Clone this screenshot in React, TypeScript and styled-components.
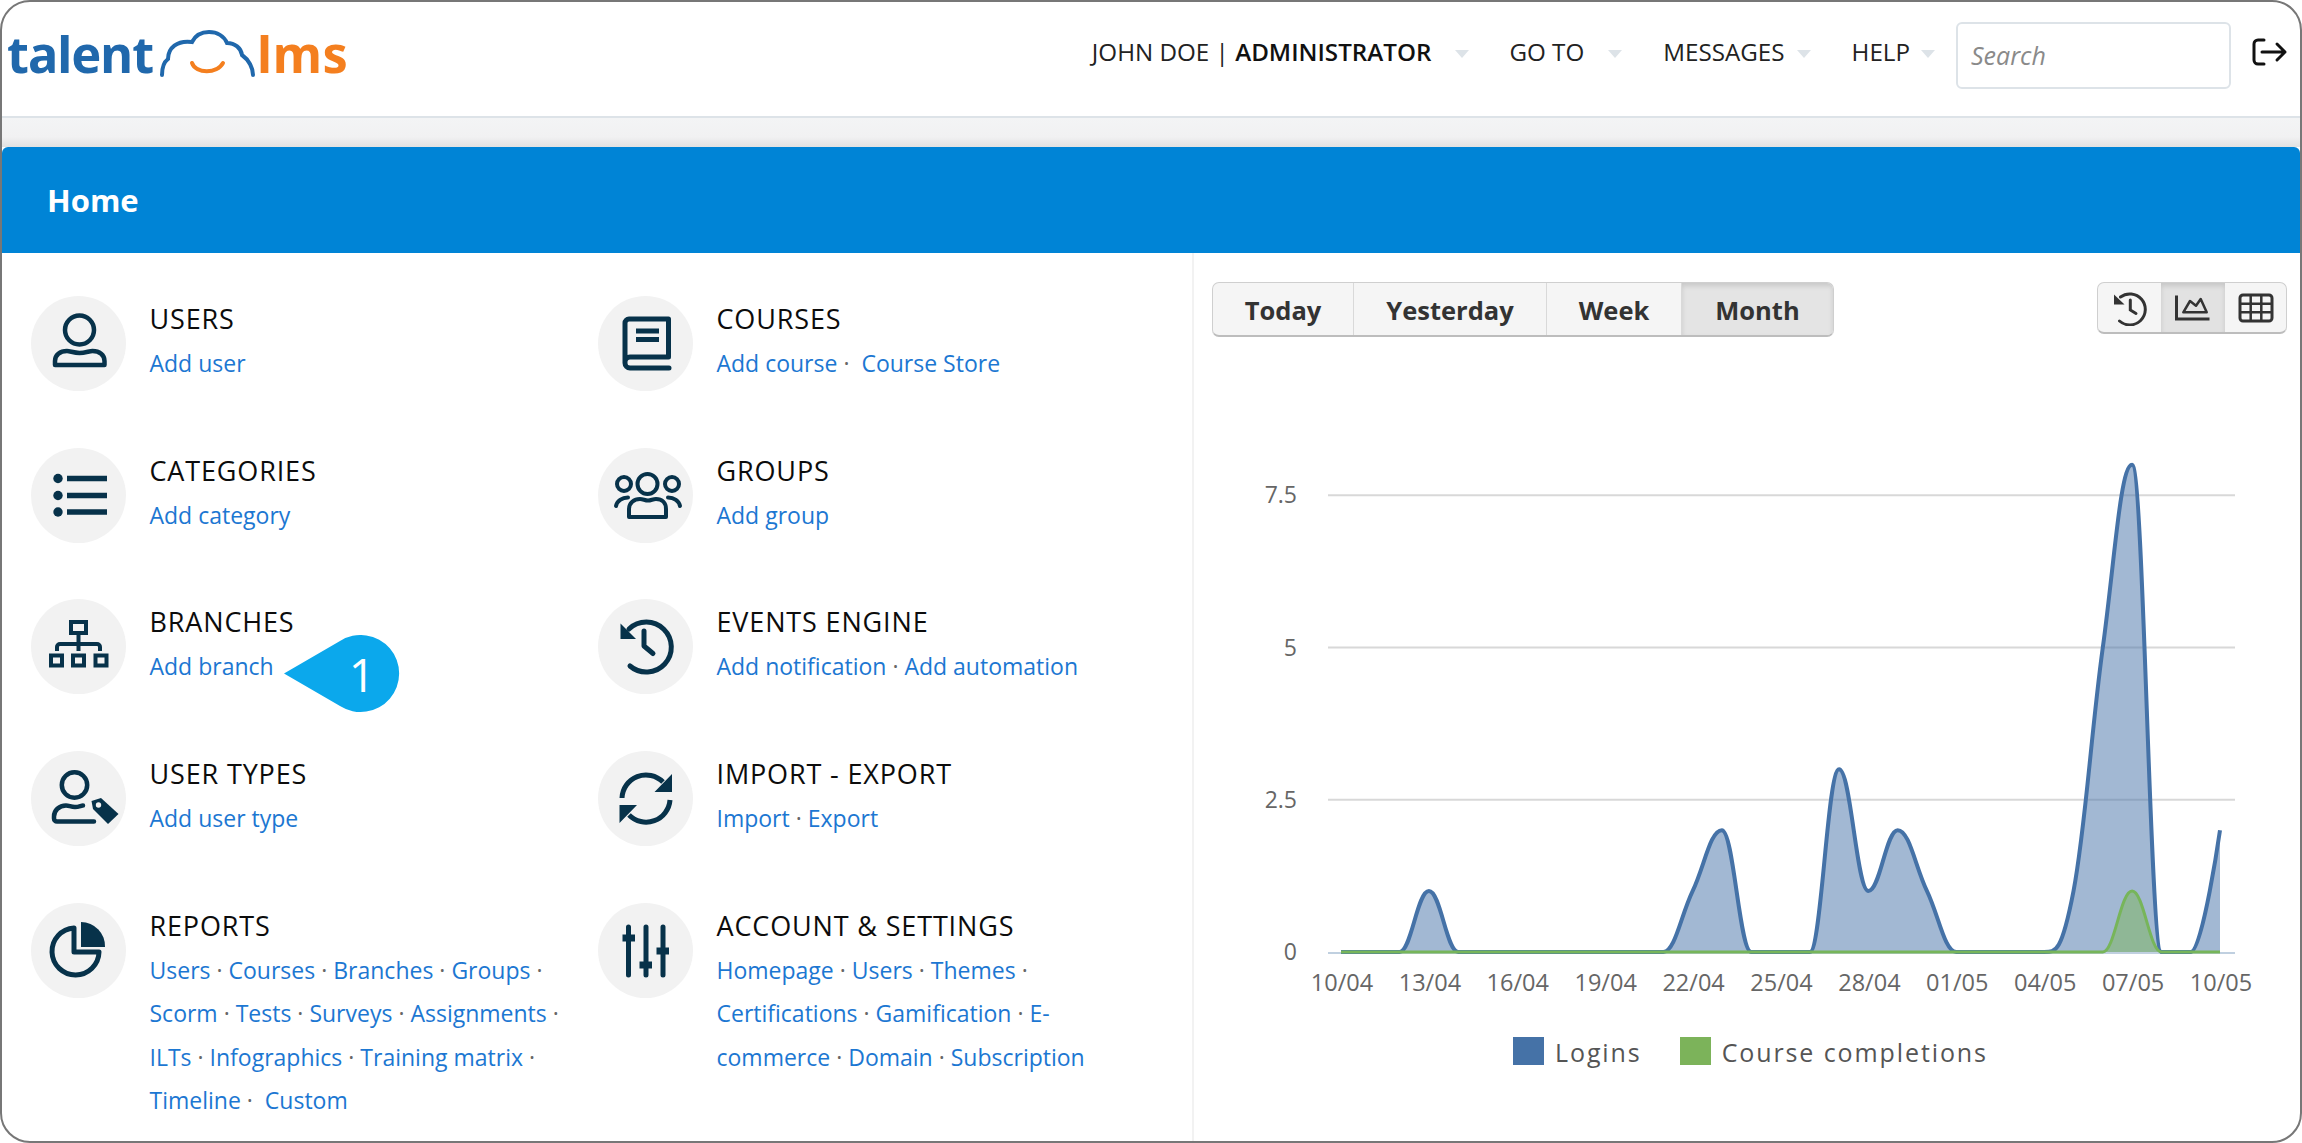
import React from 'react';
import styled, { createGlobalStyle } from 'styled-components';

const GlobalStyle = createGlobalStyle`
  html, body { margin: 0; padding: 0; background: #fff; overflow: hidden; }
  body { font-family: "Open Sans", "Noto Sans", sans-serif; }
`;

const INK = '#07324a';

const Frame = styled.div`
  width: 2302px;
  height: 1143px;
  box-sizing: border-box;
  border: 2px solid #777;
  border-radius: 30px;
  overflow: hidden;
  display: flex;
  flex-direction: column;
  background: #fff;
`;

const Header = styled.header`
  height: 114px;
  flex: none;
  border-bottom: 2px solid #dde3e8;
  display: flex;
  align-items: center;
  justify-content: space-between;
  padding: 0 12px 0 5px;
  box-sizing: content-box;
`;

const Logo = styled.div`
  display: flex;
  align-items: flex-end;
  height: 47px;
  margin-top: -12px;
`;

const LogoWord = styled.span<{ $color: string; $spacing: number }>`
  font-family: "Noto Sans", sans-serif;
  font-weight: 700;
  font-size: 50.500px;
  line-height: 47px;
  letter-spacing: ${p => p.$spacing}px;
  color: ${p => p.$color};
`;

const CloudMark = styled.svg`
  flex: none;
  margin: 0 1px 0 6px;
`;

const Nav = styled.nav`
  display: flex;
  align-items: center;
`;

const NavItem = styled.div<{ $gap: number }>`
  display: flex;
  align-items: center;
  margin-right: ${p => p.$gap}px;
  margin-top: -15px;
  font-size: 24.200px;
  color: #222;
  white-space: nowrap;
  strong { font-weight: 600; color: #111; }
`;

const Caret = styled.span<{ $gap: number }>`
  width: 0;
  height: 0;
  margin-left: ${p => p.$gap}px;
  margin-top: 4px;
  border-left: 7px solid transparent;
  border-right: 7px solid transparent;
  border-top: 8px solid #dde3e8;
`;

const SearchBox = styled.input`
  width: 275px;
  height: 67px;
  box-sizing: border-box;
  border: 2px solid #dde3e8;
  border-radius: 6px;
  padding: 0 13px 2px;
  margin-top: -7px;
  font-family: "Open Sans", sans-serif;
  font-style: italic;
  font-size: 25px;
  &::placeholder { color: #8a8a8a; opacity: 1; }
`;

const LogoutIcon = styled.svg`
  width: 36px;
  height: 28px;
  margin-left: 21px;
  margin-top: -14px;
`;

const Band = styled.div`
  height: 29px;
  flex: none;
  background: linear-gradient(#f3f4f5 0%, #f1f1f2 65%, #e2e2e2 100%);
`;

const TitleBar = styled.div`
  height: 106px;
  flex: none;
  display: flex;
  align-items: center;
  padding-left: 45px;
  background: #0084d6;
  border-radius: 6px 6px 0 0;
`;

const PageTitle = styled.h1`
  margin: 0;
  font-family: "Open Sans", sans-serif;
  font-size: 31px;
  font-weight: 700;
  color: #fff;
`;

const Main = styled.main`
  flex: 1;
  display: flex;
  min-height: 0;
`;

const MenuGrid = styled.section`
  position: relative;
  width: 1190px;
  flex: none;
  box-sizing: border-box;
  padding: 43px 0 0 28.500px;
  display: grid;
  grid-template-columns: 567px 1fr;
  grid-auto-rows: 151.700px;
`;

const MenuRow = styled.div`
  display: flex;
  gap: 24px;
  min-width: 0;
`;

const IconCircle = styled.div`
  width: 95px;
  height: 95px;
  flex: none;
  border-radius: 50%;
  background: #f2f2f2;
  svg { display: block; }
`;

const MenuText = styled.div`
  width: 420px;
  flex: none;
`;

const MenuTitle = styled.div`
  font-size: 27px;
  font-weight: 500;
  line-height: 46px;
  letter-spacing: 0.850px;
  color: #0c0c0c;
`;

const LinkList = styled.div`
  font-size: 23px;
  line-height: 43.400px;
`;

const MenuLink = styled.a`
  color: #1c77d2;
  text-decoration: none;
`;

const Dot = styled.span`
  color: #666;
`;

const Callout = styled.div`
  position: absolute;
  left: 280px;
  top: 382px;
  width: 120px;
  height: 78px;
`;

const CalloutNumber = styled.span`
  position: absolute;
  left: 60px;
  top: 0;
  width: 40px;
  text-align: center;
  font-size: 46px;
  line-height: 78px;
  color: #fff;
`;

const ChartPanel = styled.section`
  flex: 1;
  min-width: 0;
  border-left: 2px solid #f2f2f2;
  display: flex;
  flex-direction: column;
`;

const Toolbar = styled.div`
  display: flex;
  justify-content: space-between;
  align-items: flex-start;
  padding: 29px 13px 0 18px;
  height: 58px;
  flex: none;
  box-sizing: content-box;
`;

const Segments = styled.div`
  display: flex;
  height: 55px;
  box-sizing: border-box;
  border: 1px solid #cfcfcf;
  border-bottom: 2px solid #bdbdbd;
  border-radius: 7px;
  background: #f5f5f5;
  overflow: hidden;
`;

const SegmentButton = styled.button<{ $width: number; $active?: boolean }>`
  width: ${p => p.$width}px;
  border: 0;
  border-right: 1px solid #d9d9d9;
  padding: 2px 0 0;
  font-family: "Open Sans", sans-serif;
  font-size: 25.500px;
  font-weight: 700;
  color: #333;
  background: ${p => (p.$active ? '#e4e4e4' : 'transparent')};
  box-shadow: ${p => (p.$active ? 'inset 0 3px 5px rgba(0,0,0,.12)' : 'none')};
  &:last-child { border-right: 0; }
`;

const IconGroup = styled(Segments)`
  height: 52px;
`;

const IconButton = styled.button<{ $width: number; $active?: boolean }>`
  width: ${p => p.$width}px;
  border: 0;
  padding: 0;
  display: flex;
  align-items: center;
  justify-content: center;
  background: ${p => (p.$active ? '#e2e2e2' : 'transparent')};
  box-shadow: ${p => (p.$active ? 'inset 0 3px 5px rgba(0,0,0,.12)' : 'none')};
`;

const ChartSvg = styled.svg`
  display: block;
  flex: none;
  width: 1106px;
  height: 670px;
  text { font-family: "Open Sans", sans-serif; }
`;

const Legend = styled.div`
  display: flex;
  align-items: center;
  margin-top: 28px;
  padding-left: 319px;
  height: 28px;
  font-size: 25px;
  color: #555;
  letter-spacing: 1.900px;
`;

const Swatch = styled.span<{ $color: string }>`
  width: 31px;
  height: 28px;
  margin-right: 11px;
  margin-top: -2px;
  background: ${p => p.$color};
`;

const LegendLabel = styled.span`
  margin-right: 38px;
`;

// same smoothing highcharts uses for spline series
const toSpline = (pts: [number, number][]): string => {
  const conts = pts.map(([x, y], i) => {
    if (i === 0 || i === pts.length - 1) return { l: y, r: y, lx: x, rx: x };
    const [px, py] = pts[i - 1];
    const [nx, ny] = pts[i + 1];
    const lx = (1.5 * x + px) / 2.5;
    const rx = (1.5 * x + nx) / 2.5;
    let l = (1.5 * y + py) / 2.5;
    let r = (1.5 * y + ny) / 2.5;
    const c = ((r - l) * (rx - x)) / (rx - lx) + y - r;
    l += c;
    r += c;
    if (l > py && l > y) { l = Math.max(py, y); r = 2 * y - l; }
    else if (l < py && l < y) { l = Math.min(py, y); r = 2 * y - l; }
    if (r > ny && r > y) { r = Math.max(ny, y); l = 2 * y - r; }
    else if (r < ny && r < y) { r = Math.min(ny, y); l = 2 * y - r; }
    return { l, r, lx, rx };
  });
  let d = `M${pts[0][0]} ${pts[0][1]}`;
  for (let i = 1; i < pts.length; i++) {
    d += ` C${conts[i - 1].rx} ${conts[i - 1].r} ${conts[i].lx} ${conts[i].l} ${pts[i][0]} ${pts[i][1]}`;
  }
  return d;
};

const LOGINS = [0, 0, 0, 1, 0, 0, 0, 0, 0, 0, 0, 0, 1, 2, 0, 0, 0, 3, 1, 2, 1, 0, 0, 0, 0, 1, 5, 8, 0, 0, 2];
const COMPLETIONS = LOGINS.map((_, i) => (i === 27 ? 1 : 0));
const X0 = 1341;
const DAY = 29.3;
const Y0 = 952;
const UNIT = 60.9;
const toPoints = (vals: number[]): [number, number][] => vals.map((v, i) => [X0 + i * DAY, Y0 - v * UNIT]);
const X_LABELS = ['10/04', '13/04', '16/04', '19/04', '22/04', '25/04', '28/04', '01/05', '04/05', '07/05', '10/05'];
const Y_LABELS = [{ t: '7.5', v: 7.5 }, { t: '5', v: 5 }, { t: '2.5', v: 2.5 }];

const Chart = (): React.ReactElement => {
  const loginLine = toSpline(toPoints(LOGINS));
  const doneLine = toSpline(toPoints(COMPLETIONS));
  const close = ` L${X0 + 30 * DAY} ${Y0} L${X0} ${Y0} Z`;
  return (
    <ChartSvg viewBox="1194 340 1106 670">
      {Y_LABELS.map(l => (
        <g key={l.t}>
          <line x1="1328" x2="2235" y1={Y0 - l.v * UNIT} y2={Y0 - l.v * UNIT} stroke="#d8d8d8" strokeWidth="2" />
          <text x="1297" y={Y0 - l.v * UNIT + 8} textAnchor="end" fontSize="23" fill="#666">{l.t}</text>
        </g>
      ))}
      <text x="1297" y={Y0 + 8} textAnchor="end" fontSize="23" fill="#666">0</text>
      <line x1="1328" x2="2235" y1={Y0 + 1} y2={Y0 + 1} stroke="#c0d0e0" strokeWidth="2" />
      <path d={loginLine + close} fill="rgba(69,114,167,.5)" />
      <path d={loginLine} fill="none" stroke="#4572a7" strokeWidth="4" />
      <path d={doneLine + close} fill="rgba(124,181,90,.5)" />
      <path d={doneLine} fill="none" stroke="#77b55a" strokeWidth="3" />
      {X_LABELS.map((l, i) => (
        <text key={l} x={X0 + i * 3 * DAY + 1} y="991" textAnchor="middle" fontSize="23.500" fill="#666">{l}</text>
      ))}
    </ChartSvg>
  );
};

const BASE = { viewBox: '0 0 95 95', width: 95, height: 95, fill: 'none', stroke: INK, strokeWidth: 4.5, strokeLinecap: 'round' as const, strokeLinejoin: 'round' as const };

const icons: Record<string, React.ReactElement> = {
  users: (
    <svg {...BASE}>
      <circle cx="48.500" cy="34" r="14.500" />
      <path d="M24 69 v-4 c0-6 5-10 12-10 c3 0 7 2 12.500 2 s10-2 13-2 c7 0 12 4 12 10 v4 z" />
    </svg>
  ),
  courses: (
    <svg {...BASE} strokeWidth={5}>
      <path d="M70.500 23 H31 a4 4 0 0 0-4 4 v40 a5 5 0 0 0 5 5 h39 M70.500 23 v38 H32 a5 5 0 0 0-5 5" />
      <path d="M38 35 H61 M38 43.500 H61" strokeLinecap="butt" />
    </svg>
  ),
  categories: (
    <svg {...BASE} strokeWidth={5.5}>
      <path d="M36 30.500 H76 M36 47.500 H76 M36 64 H76" strokeLinecap="butt" />
      <g fill={INK} stroke="none">
        <circle cx="27" cy="30.500" r="4.700" />
        <circle cx="27" cy="47.500" r="4.700" />
        <circle cx="27" cy="64" r="4.700" />
      </g>
    </svg>
  ),
  groups: (
    <svg {...BASE} strokeWidth={4}>
      <circle cx="49.500" cy="36" r="10" />
      <circle cx="26" cy="36" r="7" />
      <circle cx="74" cy="36" r="7" />
      <path d="M31 69 H68 V61 c0-6-4-10-10-10 c-3 0-5 1.500-8 1.500 s-5-1.500-8-1.500 c-6 0-11 4-11 10 z" />
      <path d="M18 58 c1-5 6-8.500 12-8.500 M82 58 c-1-5-6-8.500-12-8.500" />
    </svg>
  ),
  branches: (
    <svg {...BASE} strokeWidth={4} strokeLinejoin="miter">
      <rect x="40" y="23" width="15" height="11" />
      <path d="M47.500 34 V52 M26 52 V48 a3 3 0 0 1 3-3 H66 a3 3 0 0 1 3 3 V52" strokeLinecap="butt" />
      <rect x="20" y="56.500" width="11" height="10" />
      <rect x="42" y="56.500" width="11" height="10" />
      <rect x="64.500" y="56.500" width="11" height="10" />
    </svg>
  ),
  events: (
    <svg {...BASE} strokeWidth={5}>
      <path d="M31 30 A25 25 0 1 1 32 67" />
      <path d="M22.500 24.500 V40 H38 Z" fill={INK} stroke="none" />
      <path d="M46 32 V47 L55 54.500" />
    </svg>
  ),
  userTypes: (
    <svg {...BASE} strokeWidth={4.5}>
      <circle cx="43.500" cy="34" r="12.700" />
      <path d="M63 70.500 H26 a3 3 0 0 1-3-3 v-2 c0-6 5-11 12-11 c3 0 5 1.500 9 1.500 s6-1.500 8-1.500" />
      <path d="M60.500 50 L70 47 L87.500 63 L77 73 L62 58 Z" fill={INK} stroke="none" />
      <circle cx="67.500" cy="54" r="2.700" fill="#f2f2f2" stroke="none" />
    </svg>
  ),
  importExport: (
    <svg {...BASE} strokeWidth={5}>
      <path d="M24 47 A24 24 0 0 1 65 31 M72 49 A24 24 0 0 1 31 64" strokeLinecap="butt" />
      <path d="M74 23 V41 H56.500 Z M21.500 54 V72 L39 54 Z" fill={INK} stroke="none" />
    </svg>
  ),
  reports: (
    <svg {...BASE} strokeWidth={5}>
      <path d="M43 25 A23.500 23.500 0 1 0 68 49 H43 Z" strokeLinecap="butt" />
      <path d="M50 19 A24 24 0 0 1 74 44 H50 Z" fill={INK} stroke="none" />
    </svg>
  ),
  settings: (
    <svg {...BASE} strokeWidth={5}>
      <path d="M30.500 24 V72 M48 24 V72 M65 24 V72" />
      <path d="M24.500 35 H37 M41.500 62 H54 M58.500 48 H71" strokeWidth={7} strokeLinecap="butt" />
    </svg>
  ),
};

interface MenuEntry {
  icon: string;
  title: string;
  links: string[];
  wideGapAfter?: string;
}

const MENU: MenuEntry[] = [
  { icon: 'users', title: 'USERS', links: ['Add user'] },
  { icon: 'courses', title: 'COURSES', links: ['Add course', 'Course Store'], wideGapAfter: 'Add course' },
  { icon: 'categories', title: 'CATEGORIES', links: ['Add category'] },
  { icon: 'groups', title: 'GROUPS', links: ['Add group'] },
  { icon: 'branches', title: 'BRANCHES', links: ['Add branch'] },
  { icon: 'events', title: 'EVENTS ENGINE', links: ['Add notification', 'Add automation'] },
  { icon: 'userTypes', title: 'USER TYPES', links: ['Add user type'] },
  { icon: 'importExport', title: 'IMPORT - EXPORT', links: ['Import', 'Export'] },
  {
    icon: 'reports',
    title: 'REPORTS',
    links: ['Users', 'Courses', 'Branches', 'Groups', 'Scorm', 'Tests', 'Surveys', 'Assignments', 'ILTs', 'Infographics', 'Training matrix', 'Timeline', 'Custom'],
    wideGapAfter: 'Timeline',
  },
  {
    icon: 'settings',
    title: 'ACCOUNT & SETTINGS',
    links: ['Homepage', 'Users', 'Themes', 'Certifications', 'Gamification', 'E-commerce', 'Domain', 'Subscription'],
  },
];

const App = (): React.ReactElement => (
  <Frame>
    <GlobalStyle />
    <Header>
      <Logo>
        <LogoWord $color="#2068ac" $spacing={-1}>talent</LogoWord>
        <CloudMark width="97" height="47" viewBox="0 0 97 47" fill="none" strokeWidth="4" strokeLinecap="round">
          <path d="M3 45 C3 38 5 32 9 29 C9 18 18 10 33 12 C37 4 44 2 50 2 C58 2 65 6 68 13 C76 13 82 18 83 25 C90 30 94 38 94 45" stroke="#2068ac" />
          <path d="M33 33 C37 44 58 44 64 33" stroke="#f47f1f" />
        </CloudMark>
        <LogoWord $color="#f47f1f" $spacing={0.5}>lms</LogoWord>
      </Logo>
      <Nav>
        <NavItem $gap={40}>JOHN DOE |&nbsp;<strong>ADMINISTRATOR</strong><Caret $gap={24} /></NavItem>
        <NavItem $gap={41}>GO TO<Caret $gap={24} /></NavItem>
        <NavItem $gap={41}>MESSAGES<Caret $gap={12} /></NavItem>
        <NavItem $gap={21}>HELP<Caret $gap={11} /></NavItem>
        <SearchBox placeholder="Search" />
        <LogoutIcon viewBox="0 0 36 28" fill="none" stroke="#111" strokeWidth="3" strokeLinecap="round" strokeLinejoin="round">
          <path d="M12 2 H6 a4 4 0 0 0-4 4 v16 a4 4 0 0 0 4 4 h6" />
          <path d="M10 14 H33 M25 6 L33 14 L25 22" />
        </LogoutIcon>
      </Nav>
    </Header>
    <Band />
    <TitleBar><PageTitle>Home</PageTitle></TitleBar>
    <Main>
      <MenuGrid>
        {MENU.map(item => (
          <MenuRow key={item.title}>
            <IconCircle>{icons[item.icon]}</IconCircle>
            <MenuText>
              <MenuTitle>{item.title}</MenuTitle>
              <LinkList>
                {item.links.map((link, i) => (
                  <React.Fragment key={link}>
                    {/* E-commerce wraps at its hyphen, one anchor per line */}
                    {link.split(/(?<=-)/).map(part => <MenuLink key={part} href="#">{part}</MenuLink>)}
                    {i < item.links.length - 1 && (
                      <Dot>{'\u00a0·'}{link === item.wideGapAfter ? '\u00a0' : ''}</Dot>
                    )}
                    {' '}
                  </React.Fragment>
                ))}
              </LinkList>
            </MenuText>
          </MenuRow>
        ))}
        <Callout>
          <svg width="120" height="78" viewBox="0 0 120 78">
            <path d="M2 38.500 L58 6 A38.500 38.500 0 1 1 58 71 Z" fill="#0ba8ec" />
          </svg>
          <CalloutNumber>1</CalloutNumber>
        </Callout>
      </MenuGrid>
      <ChartPanel>
        <Toolbar>
          <Segments>
            <SegmentButton $width={141}>Today</SegmentButton>
            <SegmentButton $width={193}>Yesterday</SegmentButton>
            <SegmentButton $width={135}>Week</SegmentButton>
            <SegmentButton $width={151} $active>Month</SegmentButton>
          </Segments>
          <IconGroup>
            <IconButton $width={63}>
              <svg width="36" height="36" viewBox="0 0 36 36" fill="none" stroke="#333" strokeWidth="3" strokeLinecap="round">
                <path d="M8.500 7 A15.500 15.500 0 1 1 7.500 31" />
                <path d="M2 4.500 V14.500 H12.500 Z" fill="#333" stroke="none" />
                <path d="M18.300 10 V20 L24 23.500" />
              </svg>
            </IconButton>
            <IconButton $width={64} $active>
              <svg width="36" height="36" viewBox="0 0 36 36" fill="none" stroke="#333" strokeWidth="3">
                <path d="M1.500 5.500 V29 H34.500" />
                <path d="M8.300 22.300 L15 11 L21 15.700 L25.700 9 L31.700 22.300 Z" strokeWidth="2.500" strokeLinejoin="round" />
              </svg>
            </IconButton>
            <IconButton $width={61}>
              <svg width="36" height="36" viewBox="0 0 36 36" fill="none" stroke="#333" strokeWidth="3">
                <rect x="2" y="5" width="32" height="26" rx="3" />
                <path d="M2 13.700 H34 M2 22.300 H34 M12.700 5 V31 M23.300 5 V31" strokeWidth="2.500" />
              </svg>
            </IconButton>
          </IconGroup>
        </Toolbar>
        <Chart />
        <Legend>
          <Swatch $color="#4572a7" />
          <LegendLabel>Logins</LegendLabel>
          <Swatch $color="#7cb35a" />
          <LegendLabel>Course completions</LegendLabel>
        </Legend>
      </ChartPanel>
    </Main>
  </Frame>
);

export default App;
